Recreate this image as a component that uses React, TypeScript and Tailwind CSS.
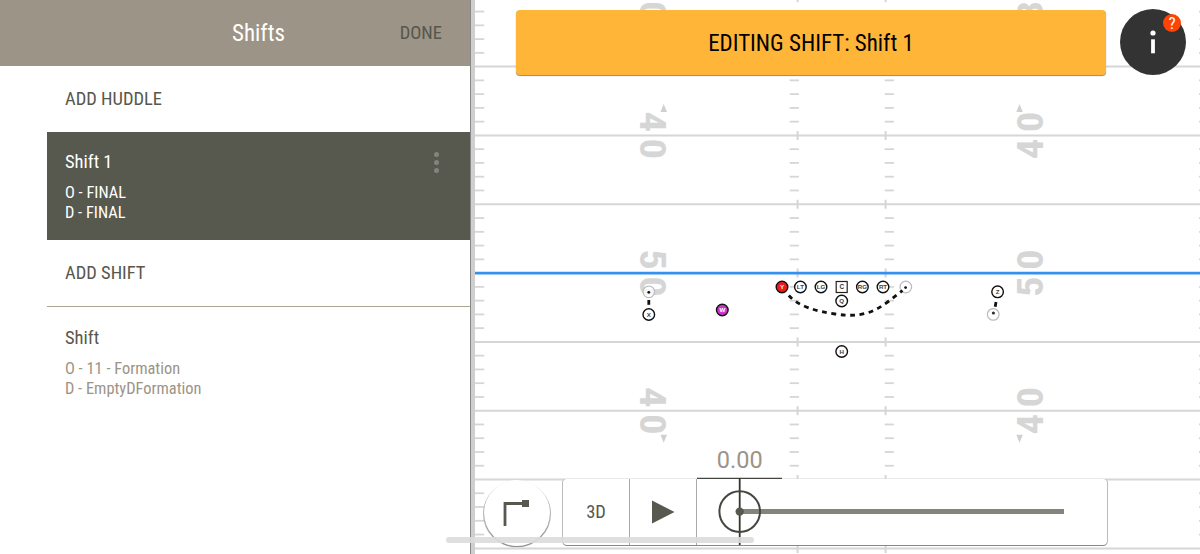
import type { ReactNode } from 'react'

interface Player {
  label: string
  x: number
  y: number
  fill?: string
  color?: string
}

const YARD_GAP = 68.82
const LINES = [-2.2, 66.6, 135.4, 204.3, 273.1, 341.9, 410.7, 479.5, 548.4]
const TICK_COLUMNS = [475, 789.7, 884.7, 1199]

const PLAYERS: Player[] = [
  { label: 'Y', x: 782, y: 287, fill: '#ee1c1c', color: '#fff' },
  { label: 'LT', x: 800.4, y: 287 },
  { label: 'LG', x: 821, y: 287 },
  { label: 'RG', x: 862.4, y: 287 },
  { label: 'RT', x: 883, y: 287 },
  { label: 'Q', x: 841.7, y: 301 },
  { label: 'H', x: 841.7, y: 351.5 },
  { label: 'X', x: 648.8, y: 314.5 },
  { label: 'W', x: 722.3, y: 310, fill: '#cc35cc', color: '#fff' },
  { label: 'Z', x: 997.6, y: 291.8 },
]

// Start positions, drawn as faded rings.
const GHOSTS = [
  { x: 648.8, y: 291.8 },
  { x: 905.8, y: 287 },
  { x: 993.2, y: 314.4 },
]

// y is the yard line that the number straddles.
const NUMBERS = [
  { digits: '30', y: -2.2 },
  { digits: '40', y: 135.4, arrow: 'up' },
  { digits: '50', y: 273.1 },
  { digits: '40', y: 410.7, arrow: 'down' },
]

function Digit({ value, x, y, angle }: { value: string; x: number; y: number; angle: number }) {
  return (
    <text
      transform={`translate(${x} ${y}) rotate(${angle}) scale(1.1 1)`}
      y={13.2}
      textAnchor="middle"
      className="fill-[#d6d6d6] font-['Roboto_Condensed','Roboto',sans-serif] text-[37px] font-bold [font-stretch:75%]"
    >
      {value}
    </text>
  )
}

function FieldNumber({ digits, y, arrow }: { digits: string; y: number; arrow?: string }) {
  const tip = arrow === 'up' ? y - 31.5 : y + 32
  const base = arrow === 'up' ? y - 23.5 : y + 24
  return (
    <g>
      {/* only the inner digit of the topmost number reaches into view */}
      {y > 0 && <Digit value={digits[0]} x={653.5} y={y - 13.5} angle={90} />}
      <Digit value={digits[1]} x={653.5} y={y + 13.5} angle={90} />
      {y > 0 && <Digit value={digits[1]} x={1030} y={y - 13.5} angle={-90} />}
      <Digit value={digits[0]} x={1030} y={y + 13.5} angle={-90} />
      {arrow && (
        <>
          <path d={`M660.5 ${base}H667L663.7 ${tip}Z`} fill="#d0d0d0" />
          <path d={`M1016.3 ${base}H1022.8L1019.5 ${tip}Z`} fill="#d0d0d0" />
        </>
      )}
    </g>
  )
}

function Field() {
  return (
    <svg
      className="absolute inset-0 h-full w-full"
      viewBox="475 0 725 554"
      preserveAspectRatio="none"
      aria-hidden="true"
    >
      {NUMBERS.map((n) => (
        <FieldNumber key={n.y} {...n} />
      ))}
      <g stroke="#d6d6d6" strokeWidth={2}>
        {LINES.map((y) => (
          <g key={y}>
            <path d={`M475 ${y}H1200`} />
            <path d={`M797.6 ${y - 4.5}v9M885.6 ${y - 4.5}v9`} />
            {[1, 2, 3, 4].map((n) =>
              TICK_COLUMNS.map((x) => (
                <path key={`${n}-${x}`} d={`M${x} ${y + (n * YARD_GAP) / 5}h9.2`} strokeWidth={1.8} />
              )),
            )}
          </g>
        ))}
      </g>
      <path d="M475 273.2H1200" stroke="#3590ee" strokeWidth={2.8} />

      {GHOSTS.map((g) => (
        <circle key={g.x} cx={g.x} cy={g.y} r={5.8} fill="#fff" fillOpacity={0.75} stroke="#bbb" strokeWidth={1.2} />
      ))}
      <g fill="none" stroke="#111" strokeWidth={2.8} strokeDasharray="4.8 4.6">
        <path d="M788.8 295.5C798 306 815 311 835 314C862 318 874 312 889 301L902.5 290.5" />
        <path d="M648.8 300v5" />
        <path d="M996 302l-1 6" />
      </g>
      <circle cx={648.8} cy={292.3} r={1.4} fill="#111" />
      <circle cx={905.6} cy={287.6} r={1.4} fill="#111" />
      <circle cx={993.4} cy={313} r={1.6} fill="#333" />

      <rect x={836.2} y={281.5} width={11} height={11} fill="#fff" stroke="#222" strokeWidth={1.2} />
      <text x={841.7} y={289.3} textAnchor="middle" className="fill-[#333] font-['Liberation_Sans'] text-[6.4px] font-bold">
        C
      </text>
      {PLAYERS.map(({ label, x, y, fill = '#fff', color = '#444' }) => (
        <g key={label}>
          <circle cx={x} cy={y} r={5.8} fill={fill} stroke="#111" strokeWidth={1.4} />
          <text
            x={x}
            y={y + 2.2}
            textAnchor="middle"
            fill={color}
            className="font-['Liberation_Sans'] text-[6.2px] font-bold"
          >
            {label}
          </text>
        </g>
      ))}
    </svg>
  )
}

function Condensed({ children, className = '' }: { children: ReactNode; className?: string }) {
  return (
    <span className={`inline-block whitespace-nowrap font-['Roboto_Condensed','Roboto',sans-serif] [font-stretch:75%] ${className}`}>
      {children}
    </span>
  )
}

function Sidebar() {
  return (
    <aside className="flex w-[475px] shrink-0 border-r-4 border-[#cfcfcf]">
      <div className="flex flex-1 flex-col border-r border-[#888] bg-white">
        <header className="grid h-[66px] grid-cols-[47px_1fr] bg-[#9c9486]">
          <div className="col-start-2 grid grid-cols-[1fr_auto_1fr] items-center">
            <Condensed className="col-start-2 pt-0.5 text-[23px] text-white">Shifts</Condensed>
            <button className="mr-7 justify-self-end pt-px text-[#57574d]">
              <Condensed className="text-[18.5px]">DONE</Condensed>
            </button>
          </div>
        </header>

        <div className="ml-[47px] flex flex-col text-[#57574d]">
          <button className="flex h-[66px] items-center pt-0.5 pl-[18px]">
            <Condensed className="text-[18.5px]">ADD HUDDLE</Condensed>
          </button>
          <div className="flex h-[108px] justify-between bg-[#57584e] pt-[18px] pr-[31px] pl-[18px] text-white">
            <div className="flex flex-col items-start">
              <Condensed className="text-[18.5px] leading-6">Shift 1</Condensed>
              <Condensed className="mt-[9px] text-[16.4px] leading-[19.5px]">O - FINAL</Condensed>
              <Condensed className="text-[16.4px] leading-[19.5px]">D - FINAL</Condensed>
            </div>
            <button aria-label="More" className="flex flex-col gap-[3px] self-start pt-0.5">
              <span className="size-[5px] rounded-full bg-[#83847b]" />
              <span className="size-[5px] rounded-full bg-[#83847b]" />
              <span className="size-[5px] rounded-full bg-[#83847b]" />
            </button>
          </div>
          <button className="flex h-[67px] items-center border-b border-[#aaa593] pt-0.5 pl-[18px]">
            <Condensed className="text-[18.5px]">ADD SHIFT</Condensed>
          </button>
          <div className="flex flex-col items-start pt-[19px] pl-[18px]">
            <Condensed className="text-[18.5px] leading-6">Shift</Condensed>
            <div className="mt-[9px] flex flex-col items-start text-[#9c9486]">
              <Condensed className="text-[16.4px] leading-[19.5px]">O - 11 - Formation</Condensed>
              <Condensed className="text-[16.4px] leading-[19.5px]">D - EmptyDFormation</Condensed>
            </div>
          </div>
        </div>
      </div>
    </aside>
  )
}

function Playback() {
  return (
    <div className="flex items-end pl-[9px]">
      <button
        aria-label="Draw route"
        className="mb-2 flex size-[66px] items-center justify-center rounded-full bg-white shadow-[0_1px_1px_0_#888,1px_1px_0_0_#bbb,-1px_1px_0_0_#bbb]"
      >
        <svg width="28" height="28" viewBox="0 0 28 28" fill="none">
          <path d="M2 27V4.5H19" stroke="#57584e" strokeWidth="2.8" />
          <path d="M19 1h7v7h-7z" fill="#57584e" />
        </svg>
      </button>
      <div className="mb-[9px] ml-[13px] flex h-[66px] w-[544px] rounded bg-white shadow-[0_1px_0_0_#888,1px_0_0_0_#bbb,-1px_0_0_0_#bbb]">
        <button className="w-[67px] border-r border-[#aaa] pt-0.5 text-[#57584e]">
          <Condensed className="text-[18.5px]">3D</Condensed>
        </button>
        <button aria-label="Play" className="flex w-[67px] items-center justify-center border-r border-[#aaa]">
          <svg width="24" height="24" viewBox="0 0 24 24">
            <path d="M1 0.5L23.5 12L1 23.5Z" fill="#57584e" />
          </svg>
        </button>
        <svg className="overflow-visible" width="410" height="66" viewBox="697 479 410 66">
          <path d="M740 511.6H1064" stroke="#83857a" strokeWidth="5" />
          <path d="M697 478.3H782" stroke="#45463f" strokeWidth="1.3" />
          <path d="M739.7 478V545" stroke="#35362f" strokeWidth="1.8" />
          <circle cx="739.7" cy="511.6" r="20.3" fill="none" stroke="#45463f" strokeWidth="2" />
          <circle cx="739.7" cy="511.6" r="4.2" fill="#57584e" />
          <text x="739.7" y="468" textAnchor="middle" className="fill-[#9c9486] font-['Roboto'] text-[23.5px] font-normal">
            0.00
          </text>
        </svg>
      </div>
    </div>
  )
}

export default function App() {
  return (
    <div className="relative flex h-[554px] w-[1200px] overflow-hidden bg-white">
      <Sidebar />
      <main className="relative flex-1">
        <Field />
        <div className="relative flex h-full flex-col justify-between">
          <div className="flex pt-[9px] pl-[41px]">
            <div className="mt-px flex h-[65px] w-[590px] items-center justify-center rounded bg-[#ffb638] pt-[3px] text-black shadow-[0_1px_1px_0_#888]">
              <Condensed className="text-[23px]">EDITING SHIFT: Shift 1</Condensed>
            </div>
            <button aria-label="Info" className="relative ml-3.5 size-[66px] rounded-full bg-[#333]">
              <svg className="mx-auto" width="10" height="26" viewBox="0 0 10 26" fill="#fff">
                <circle cx="5" cy="4" r="2.6" />
                <path d="M3.1 10.3h3.8v14H3.1z" />
              </svg>
              <span className="absolute top-[5px] right-[5px] flex size-[18px] items-center justify-center rounded-full bg-[#ff4304] text-white">
                <Condensed className="text-[17px] leading-none">?</Condensed>
              </span>
            </button>
          </div>
          <Playback />
        </div>
      </main>
      <div className="absolute bottom-[11px] left-[446px] h-1.5 w-[308px] rounded-full bg-[#dcdcdc]/90" />
    </div>
  )
}
